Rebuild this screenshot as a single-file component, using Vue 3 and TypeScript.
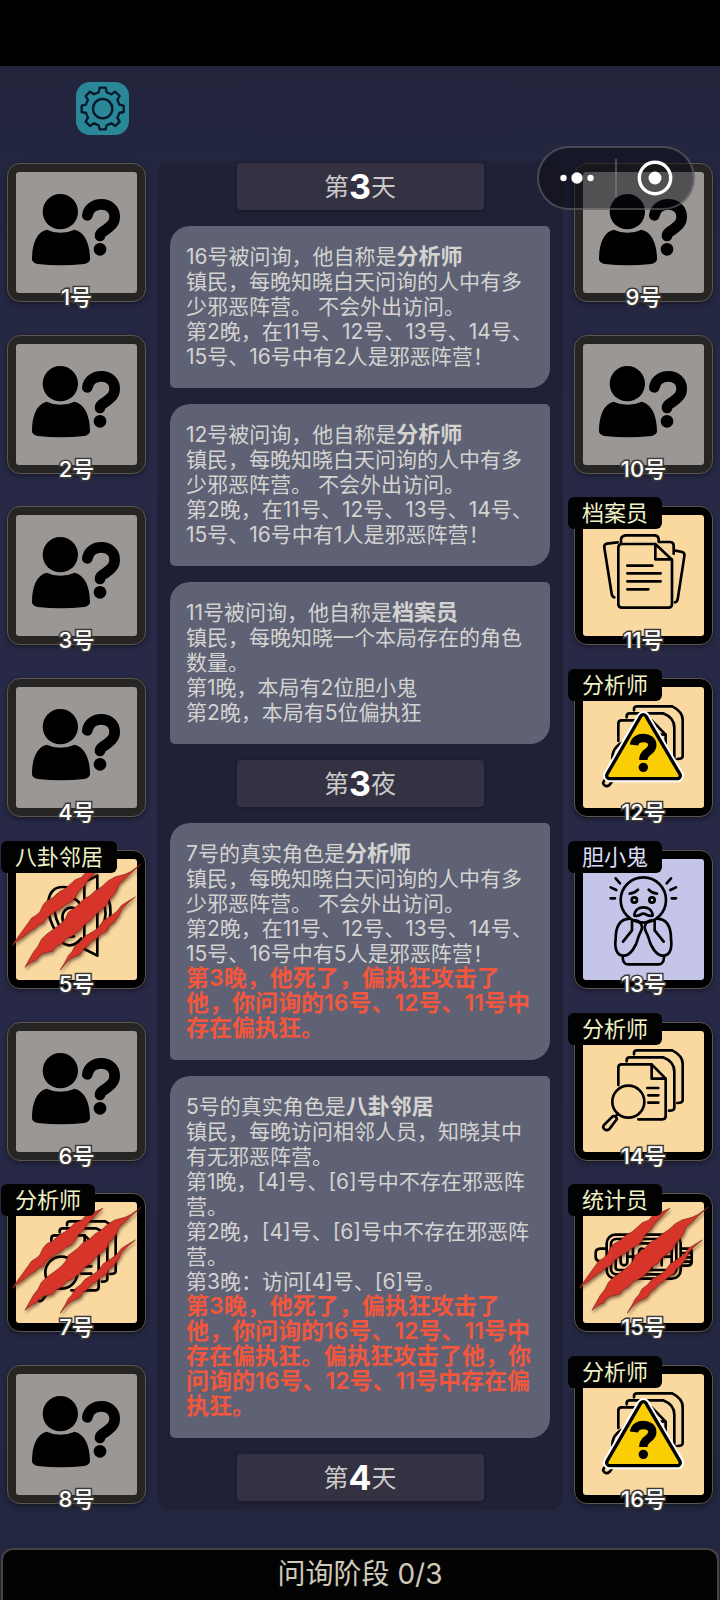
<script setup lang="ts">
type Icon = 'unknown' | 'archivist' | 'analyst' | 'coward' | 'counter' | 'neighbor'

interface Player {
  id: number
  role?: string
  icon: Icon
  tone: 'grey' | 'town' | 'outsider'
  dead?: boolean
  suspect?: boolean
}

interface Entry {
  kind: 'card' | 'day'
  prefix?: string
  role?: string
  lines?: string[]
  alert?: string[]
  day?: number
  unit?: string
}

const unknown = (id: number): Player => ({ id, icon: 'unknown', tone: 'grey' })

const columns: { side: string; players: Player[] }[] = [
  {
    side: 'left',
    players: [
      unknown(1),
      unknown(2),
      unknown(3),
      unknown(4),
      { id: 5, role: '八卦邻居', icon: 'neighbor', tone: 'town', dead: true },
      unknown(6),
      { id: 7, role: '分析师', icon: 'analyst', tone: 'town', dead: true },
      unknown(8),
    ],
  },
  {
    side: 'right',
    players: [
      unknown(9),
      unknown(10),
      { id: 11, role: '档案员', icon: 'archivist', tone: 'town' },
      { id: 12, role: '分析师', icon: 'analyst', tone: 'town', suspect: true },
      { id: 13, role: '胆小鬼', icon: 'coward', tone: 'outsider' },
      { id: 14, role: '分析师', icon: 'analyst', tone: 'town' },
      { id: 15, role: '统计员', icon: 'counter', tone: 'town', dead: true },
      { id: 16, role: '分析师', icon: 'analyst', tone: 'town', suspect: true },
    ],
  },
]

const analystLines = (count: number): string[] => [
  '镇民，每晚知晓白天问询的人中有多',
  '少邪恶阵营。 不会外出访问。',
  '第2晚，在11号、12号、13号、14号、',
  `15号、16号中有${count}人是邪恶阵营！`,
]

const entries: Entry[] = [
  { kind: 'day', day: 3, unit: '天' },
  { kind: 'card', prefix: '16号被问询，他自称是', role: '分析师', lines: analystLines(2) },
  { kind: 'card', prefix: '12号被问询，他自称是', role: '分析师', lines: analystLines(1) },
  {
    kind: 'card',
    prefix: '11号被问询，他自称是',
    role: '档案员',
    lines: ['镇民，每晚知晓一个本局存在的角色', '数量。', '第1晚，本局有2位胆小鬼', '第2晚，本局有5位偏执狂'],
  },
  { kind: 'day', day: 3, unit: '夜' },
  {
    kind: 'card',
    prefix: '7号的真实角色是',
    role: '分析师',
    lines: analystLines(5),
    alert: ['第3晚，他死了，偏执狂攻击了', '他，你问询的16号、12号、11号中', '存在偏执狂。'],
  },
  {
    kind: 'card',
    prefix: '5号的真实角色是',
    role: '八卦邻居',
    lines: [
      '镇民，每晚访问相邻人员，知晓其中',
      '有无邪恶阵营。',
      '第1晚，[4]号、[6]号中不存在邪恶阵',
      '营。',
      '第2晚，[4]号、[6]号中不存在邪恶阵',
      '营。',
      '第3晚：访问[4]号、[6]号。',
    ],
    alert: [
      '第3晚，他死了，偏执狂攻击了',
      '他，你问询的16号、12号、11号中',
      '存在偏执狂。偏执狂攻击了他，你',
      '问询的16号、12号、11号中存在偏',
      '执狂。',
    ],
  },
  { kind: 'day', day: 4, unit: '天' },
]
</script>

<template>
  <div class="app" lang="zh-CN">
    <div class="status"></div>
    <header class="top">
      <button class="gear" type="button" aria-label="设置">
        <svg viewBox="0 0 159 159">
          <g fill="none" stroke="#07182a" stroke-width="7" stroke-linejoin="round">
            <path d="M71 17H89L92 31Q99 33 106 37L117 29L131 42L124 54Q128 61 130 68L143 71V90L130 93Q128 101 124 107L131 119L118 132L106 124Q99 128 92 130L89 142H71L68 130Q61 128 54 124L42 132L29 119L36 107Q32 100 30 93L17 90V71L30 68Q32 61 36 54L29 42L42 29L54 37Q61 33 68 31Z" />
            <circle cx="80" cy="80" r="29" />
          </g>
        </svg>
      </button>
    </header>

    <main class="board">
      <template v-for="(column, i) in columns" :key="column.side">
        <section class="column" :class="column.side">
          <button v-for="p in column.players" :key="p.id" type="button" class="tile" :class="p.tone">
            <span class="face">
              <svg viewBox="0 0 363 363" aria-hidden="true">
                <g v-if="p.icon === 'unknown'">
                  <circle cx="133" cy="119" r="53" />
                  <path d="M92 173Q133 192 176 173C206 180 222 215 222 262Q222 272 205 276Q133 284 65 276Q48 272 48 262C48 215 62 180 92 173Z" />
                  <path d="M214 130C218 106 238 97 256 97C280 97 296 113 296 134C296 155 282 164 268 174C256 183 252 184 252 192" fill="none" stroke="#000" stroke-width="32" stroke-linecap="round" />
                  <circle cx="252" cy="232" r="19" />
                </g>
                <g v-else-if="p.icon === 'archivist'" class="line">
                  <path d="M217 87H117Q106 87 106 98V267Q106 278 117 278H256Q267 278 267 267V134L217 87V133H267" />
                  <path d="M114 83V72Q116 62 128 61H216Q226 62 227 72V81H262Q272 82 272 92V116" />
                  <path d="M104 82L72 86Q62 88 64 98L86 236Q88 246 94 247" />
                  <path d="M277 107L298 111Q306 114 304 124L284 253Q282 262 276 262" />
                  <path d="M133 152H208M133 175H233M133 199H233M133 223H196" />
                </g>
                <g v-else-if="p.icon === 'analyst'" class="line">
                  <path d="M106 162V110Q106 100 116 100H206L248 143V255Q248 265 238 265H166M206 100V143H248" />
                  <path d="M131 91V87Q131 79 141 79H240Q274 92 274 122V230Q274 239 258 239" />
                  <path d="M153 70V66Q153 58 163 58H268Q299 74 299 98V208Q299 216 283 216" />
                  <circle cx="136" cy="212" r="48" />
                  <path d="M105 248L97 257M89 256Q98 253 102 264L80 293Q71 301 65 295Q57 289 63 282ZM193 171H226M196 193H226M196 215H226" />
                </g>
                <g v-else-if="p.icon === 'coward'" class="line">
                  <circle cx="181" cy="123" r="68" />
                  <circle cx="154" cy="123" r="8" />
                  <circle cx="207" cy="123" r="8" />
                  <path d="M140 104Q155 103 165 92M222 104Q207 103 197 92" />
                  <path d="M154 170C155 153 168 145 181 145C195 145 208 153 209 170C195 174 190 164 181 164C172 164 168 174 154 170Z" />
                  <path d="M98 58L111 73M83 85L100 93M83 118H96M264 58L251 73M279 85L262 93M279 118H266" />
                  <path d="M140 179C110 180 98 205 98 240C94 270 102 290 122 290C142 290 160 262 166 235C170 219 177 218 177 204C172 183 158 182 147 186L147 214L120 248" />
                  <path transform="translate(362 0) scale(-1 1)" d="M140 179C110 180 98 205 98 240C94 270 102 290 122 290C142 290 160 262 166 235C170 219 177 218 177 204C172 183 158 182 147 186L147 214L120 248" />
                  <path d="M119 294Q120 316 134 316H228Q242 316 243 294" />
                </g>
                <g v-else-if="p.icon === 'counter'" class="line">
                  <rect x="71" y="98" width="222" height="132" rx="26" />
                  <rect x="84" y="111" width="196" height="106" rx="16" />
                  <rect x="98" y="124" width="168" height="80" rx="8" />
                  <path d="M150 124V204M206 124V204M98 164H108M138 164H164M196 164H218M244 164H266" />
                  <rect x="113" y="138" width="20" height="52" rx="10" />
                  <path d="M190 144Q168 132 168 152Q170 162 180 164Q192 168 190 180Q182 194 166 184M226 144L236 138V190" />
                  <path d="M68 140H52Q38 141 38 152V166Q39 176 50 178H56V192H68M294 140H318Q326 141 326 150V180Q325 190 314 191H294M298 153H326M298 166H326M298 179H326" />
                </g>
                <g v-else class="line">
                  <path d="M97 125C102 96 118 84 140 84Q162 84 178 100M97 125C94 170 106 196 122 222C138 266 170 270 196 238" />
                  <path d="M116 122C120 108 130 102 142 102M114 134C114 170 124 194 140 216Q154 238 174 232" />
                  <path d="M144 132Q162 112 180 122Q194 132 196 150M142 190C132 160 152 144 168 146Q184 148 188 166M154 196C148 178 158 164 170 166" />
                  <path d="M205 68L244 50V290L205 270ZM205 68V270L194 264" />
                  <path d="M260 128C272 150 270 180 258 206M276 116C288 146 286 176 272 210" />
                </g>

                <g v-if="p.suspect" stroke-linejoin="round">
                  <path d="M181 92L283 266H80Z" fill="#fff" stroke="#fff" stroke-width="40" />
                  <path d="M181 92L283 266H80Z" fill="#000" stroke="#000" stroke-width="28" />
                  <path d="M181 92L283 266H80Z" fill="#fbce04" stroke="#fbce04" stroke-width="8" />
                  <path d="M153 174C155 159 167 153 181 153C197 153 208 161 208 174C208 186 200 191 192 197C184 203 181 207 181 219" fill="none" stroke="#000" stroke-width="25" />
                  <circle cx="181" cy="241" r="14" />
                </g>

                <g v-if="p.dead" class="claws">
                  <path d="M261 19L222 36L206 44L197 55L178 62L167 72L147 90L130 98L112 115L92 126L82 137L72 158L62 168L47 177L38 190L22 212L-11 258L18 236L32 225L47 214L58 208L67 198L82 192L92 176L117 158L132 150L147 138L166 128L177 116L188 96L202 84L217 62L240 38Z" />
                  <path d="M376 15L344 38L327 46L297 54L277 65L256 84L237 96L222 110L202 121L184 140L157 160L149 178L137 192L117 208L94 224L77 240L66 262L52 280L27 325L48 308L62 302L70 290L82 283L110 276L122 262L137 254L152 238L167 232L192 213L208 194L222 186L238 166L252 156L272 138L279 122L290 112L302 94L309 76L326 60L350 38Z" />
                  <path d="M358 114L334 128L317 139L304 156L287 169L262 185L250 202L237 214L207 232L194 248L177 261L168 278L157 290L147 310L133 333L154 308L167 297L192 286L202 270L214 262L228 246L242 238L256 224L272 216L280 200L294 190L307 172L318 150L336 132Z" />
                </g>
              </svg>
            </span>
            <span v-if="p.role" class="tag">{{ p.role }}</span>
            <span class="seat">{{ p.id }}号</span>
          </button>
        </section>

        <section v-if="i === 0" class="log">
          <template v-for="(e, n) in entries" :key="n">
            <h2 v-if="e.kind === 'day'" class="day">第<b>{{ e.day }}</b>{{ e.unit }}</h2>
            <article v-else class="card">
              <p>{{ e.prefix }}<b>{{ e.role }}</b></p>
              <p v-for="(l, k) in e.lines" :key="k">{{ l }}</p>
              <p v-for="(l, k) in e.alert" :key="'a' + k" class="alert">{{ l }}</p>
            </article>
          </template>
        </section>
      </template>
    </main>

    <footer class="phase">问询阶段 0/3</footer>

    <div class="capsule">
      <button type="button" aria-label="更多">
        <svg viewBox="0 0 34 12" width="34" height="12" fill="#fff">
          <circle cx="3.5" cy="6" r="3.2" />
          <circle cx="17" cy="6" r="5.7" />
          <circle cx="30.5" cy="6" r="3.2" />
        </svg>
      </button>
      <i></i>
      <button type="button" aria-label="关闭">
        <svg viewBox="0 0 36 36" width="36" height="36">
          <circle cx="18" cy="18" r="15.7" fill="none" stroke="#fff" stroke-width="3.4" />
          <circle cx="18" cy="18" r="6.5" fill="#fff" />
        </svg>
      </button>
    </div>
  </div>
</template>

<style>
body {
  margin: 0;
  background: #23263f;
}
</style>

<style scoped>
.app {
  position: relative;
  min-height: 100vh;
  display: flex;
  flex-direction: column;
  font-family: Inter, "Noto Sans CJK SC", sans-serif;
  background: linear-gradient(#22243c 66px, #23263f 160px, #272946 500px, #272946 1100px, #22263f 1560px);
}
.status {
  height: 66px;
  background: #000;
}
.top {
  height: 79px;
  padding: 16px 76px 0;
  box-sizing: border-box;
  margin-bottom: 16px;
}
button {
  padding: 0;
  border: 0;
  font: inherit;
  background: none;
  cursor: pointer;
}
.gear {
  width: 53px;
  height: 53px;
  border-radius: 14px;
  background: #2a8797;
}
.gear svg {
  display: block;
}
.board {
  display: grid;
  grid-template-columns: 139px minmax(0, 1fr) 139px;
  gap: 11px;
  padding: 0 7px;
}
.column {
  display: flex;
  flex-direction: column;
  justify-content: space-between;
  padding: 2px 0 6px;
}
.tile {
  position: relative;
  display: block;
  height: 139px;
  padding: 8px;
  border: 1px solid #5c564d;
  border-radius: 13px;
  background: #000;
  box-shadow: 0 2px 5px rgba(0, 0, 0, 0.4);
}
.grey {
  background: #262524;
}
.face {
  display: block;
  height: 121px;
  border-radius: 3px;
  background: #f9d9a0;
}
.grey .face {
  background: #9b9795;
}
.outsider .face {
  background: #c5c5ea;
}
.face svg {
  display: block;
  width: 121px;
  height: 121px;
  overflow: visible;
}
.line {
  fill: none;
  stroke: #000;
  stroke-width: 8;
  stroke-linecap: round;
  stroke-linejoin: round;
}
.claws {
  fill: #d7352a;
  stroke: #7d251b;
  stroke-width: 2;
  filter: drop-shadow(3px 7px 4px rgba(60, 20, 10, 0.55));
}
.tag {
  position: absolute;
  top: -10px;
  left: -7px;
  padding: 0 14px;
  border-radius: 6px;
  font-size: 22px;
  line-height: 32px;
  white-space: nowrap;
  color: #eff0c4;
  background: #020203;
}
.outsider .tag {
  color: #dcdcf6;
}
.seat {
  position: absolute;
  left: 0;
  right: 0;
  bottom: -12px;
  font-size: 22px;
  font-weight: 500;
  line-height: 32px;
  text-align: center;
  color: #fff;
  paint-order: stroke fill;
  -webkit-text-stroke: 3px #3c3a38;
}
.log {
  display: flex;
  flex-direction: column;
  gap: 16px;
  padding: 2px 13px 9px;
  border-radius: 14px;
  background: #202137;
}
.day {
  align-self: center;
  display: flex;
  align-items: center;
  justify-content: center;
  width: 65%;
  height: 47px;
  margin: 0;
  border-radius: 4px;
  font-size: 25px;
  line-height: 44px;
  font-weight: 400;
  color: #cbcac8;
  background: #333142;
  box-shadow: 0 1px 4px rgba(0, 0, 0, 0.3);
}
.day b {
  font-size: 34px;
  color: #fff;
}
.card {
  padding: 18px 5px 19px 16px;
  border-radius: 20px 5px 20px 5px;
  font-size: 21px;
  line-height: 25px;
  color: #d4d3d0;
  background: #5f6275;
}
.card p {
  margin: 0;
  white-space: pre-wrap;
}
.card b {
  font-size: 22px;
  line-height: 24px;
}
.card .alert {
  font-size: 23px;
  font-weight: 600;
  color: #f2573d;
}
.phase {
  flex: 1;
  margin: 38px 1px 0;
  border: 2px solid #45433f;
  border-bottom: 0;
  border-radius: 12px 12px 0 0;
  font-size: 28px;
  line-height: 48px;
  text-align: center;
  color: #cfc9b8;
  background: #040304;
}
.capsule {
  position: absolute;
  top: 146px;
  right: 25px;
  display: flex;
  align-items: center;
  width: 158px;
  height: 64px;
  box-sizing: border-box;
  border: 2px solid rgba(150, 150, 155, 0.4);
  border-radius: 32px;
  background: rgba(10, 10, 18, 0.5);
}
.capsule button {
  flex: 1;
  display: flex;
  align-items: center;
  justify-content: center;
  height: 60px;
}
.capsule i {
  width: 2px;
  height: 38px;
  background: rgba(150, 150, 155, 0.4);
}
</style>
